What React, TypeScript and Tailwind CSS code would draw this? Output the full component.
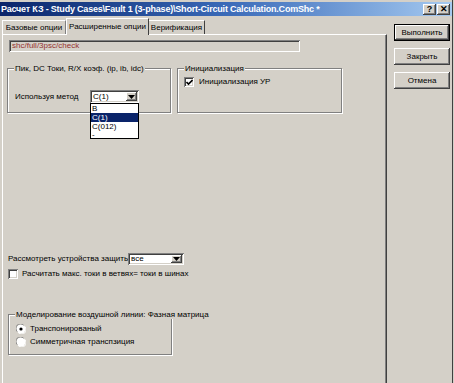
import React from "react";

const raised =
  "shadow-[inset_-1px_-1px_0_#404040,inset_1px_1px_0_#ffffff,inset_-2px_-2px_0_#808080,inset_2px_2px_0_#d4d0c8]";
const sunken =
  "shadow-[inset_1px_1px_0_#808080,inset_-1px_-1px_0_#ffffff,inset_2px_2px_0_#404040,inset_-2px_-2px_0_#d4d0c8]";
const etched = "border border-[#808080] shadow-[1px_1px_0_#fff,inset_1px_1px_0_#fff]";

function TitleBtn({ children }: { children: React.ReactNode }) {
  return (
    <div className={`w-[13px] h-[11px] bg-[#d4d0c8] ${raised} flex items-center justify-center text-[9px] font-bold text-black`}>
      {children}
    </div>
  );
}

function Arrow() {
  return (
    <div className={`w-[11px] h-full bg-[#d4d0c8] ${raised} flex items-center justify-center`}>
      <svg width="7" height="4" viewBox="0 0 7 4">
        <path d="M0 0h7L3.5 4z" fill="#000" />
      </svg>
    </div>
  );
}

function Check({ checked }: { checked?: boolean }) {
  return (
    <div className={`w-[10px] h-[10px] bg-white ${sunken} flex items-center justify-center shrink-0`}>
      {checked && (
        <svg width="7" height="7" viewBox="0 0 7 7">
          <path d="M0.5 3l2 2 4-4" stroke="#000" strokeWidth="1.6" fill="none" />
        </svg>
      )}
    </div>
  );
}

function Radio({ checked }: { checked?: boolean }) {
  return (
    <svg width="10" height="10" viewBox="0 0 10 10" className="shrink-0">
      <circle cx="5" cy="5" r="4.5" fill="#fff" />
      <path d="M1.2 7.6A4.5 4.5 0 0 1 7.6 1.2" stroke="#808080" strokeWidth="1" fill="none" />
      <path d="M2.4 8.8A4.5 4.5 0 0 0 8.8 2.4" stroke="#ffffff" strokeWidth="1" fill="none" />
      {checked && <circle cx="5" cy="5" r="1.6" fill="#000" />}
    </svg>
  );
}

function WinButton({ children, def }: { children: React.ReactNode; def?: boolean }) {
  return (
    <div
      className={`w-[56px] h-[17px] bg-[#d4d0c8] flex items-center justify-center ${
        def ? "border border-black" : ""
      }`}
    >
      <div className={`w-full h-full ${raised} flex items-center justify-center`}>{children}</div>
    </div>
  );
}

function GroupLabel({ children }: { children: React.ReactNode }) {
  return (
    <div className="-mt-[5px] ml-[6px] h-[9px] px-[1px] bg-[#d4d0c8] w-fit whitespace-nowrap flex items-center">
      {children}
    </div>
  );
}

export default function App() {
  return (
    <div className="w-[454px] h-[383px] bg-[#d4d0c8] overflow-hidden font-['Liberation_Sans',Arial,sans-serif] text-[8px] text-black leading-none">
      <div className="w-[453px] h-full border-r border-[#404040]">
        <div className="h-[2px]" />
        <div className="h-[14px] flex items-center bg-gradient-to-r from-[#0a246a] via-[#3a6ab8] to-[#a6caf0] pl-[1px] pr-[2px]">
          <span className="text-white font-bold text-[9px] whitespace-nowrap tracking-[-0.2px]">
            Расчет КЗ - Study Cases\Fault 1 (3-phase)\Short-Circuit Calculation.ComShc *
          </span>
          <div className="ml-auto flex gap-[1px]">
            <TitleBtn>?</TitleBtn>
            <TitleBtn>✕</TitleBtn>
          </div>
        </div>
        <div className="flex">
          <div className="w-[387px] pl-[2px] flex flex-col">
            <div className="flex items-end h-[18px] whitespace-nowrap">
              <div className="w-[64px] h-[14px] border-t border-l border-white border-r border-r-[#808080] flex items-center justify-center">
                Базовые опции
              </div>
              <div className="w-[83px] h-[17px] -mb-[1px] relative z-10 bg-[#d4d0c8] border-t border-l border-white border-r border-r-[#404040] flex items-center justify-center pb-[1px]">
                Расширенные опции
              </div>
              <div className="w-[56px] h-[14px] border-t border-white border-r border-r-[#404040] flex items-center justify-center">
                Верификация
              </div>
            </div>
            <div className="h-[360px] border-t border-l border-white border-r border-r-[#404040] shadow-[inset_-1px_0_0_#808080] flex flex-col pl-[4px] whitespace-nowrap">
              <div className={`mt-[5px] ml-[2px] w-[291px] h-[12px] ${sunken} flex items-center pl-[3px] text-[#963030]`}>
                shc/full/3psc/check
              </div>
              <div className="flex mt-[16px] gap-[6px]">
                <div className={`w-[164px] h-[45px] ${etched} flex flex-col`}>
                  <GroupLabel>Пик, DC Токи, R/X коэф. (ip, ib, idc)</GroupLabel>
                  <div className="flex items-center mt-[17px] pl-[7px]">
                    <span className="w-[75px]">Используя метод</span>
                    <div className="relative">
                      <div className={`w-[49px] h-[13px] bg-white ${sunken} flex items-center p-[2px]`}>
                        <span className="flex-1 pl-[1px]">C(1)</span>
                        <Arrow />
                      </div>
                      <div className="absolute left-0 top-full w-[49px] h-[36px] bg-white border border-black flex flex-col z-20">
                        <div className="h-[9px] pl-[1px] flex items-center">B</div>
                        <div className="h-[9px] pl-[1px] flex items-center bg-[#0a246a] text-white">C(1)</div>
                        <div className="h-[9px] pl-[1px] flex items-center">C(012)</div>
                        <div className="h-[7px] pl-[1px] flex items-center">-</div>
                      </div>
                    </div>
                  </div>
                </div>
                <div className={`w-[165px] h-[45px] ${etched} flex flex-col`}>
                  <GroupLabel>Инициализация</GroupLabel>
                  <div className="flex items-center gap-[5px] mt-[4px] pl-[6px]">
                    <Check checked />
                    <span>Инициализация УР</span>
                  </div>
                </div>
              </div>
              <div className="flex items-center mt-[140px] ml-[1px]">
                <span className="w-[120px] overflow-hidden">Рассмотреть устройства защиты</span>
                <div className={`w-[56px] h-[12px] bg-white ${sunken} flex items-center p-[2px]`}>
                  <span className="flex-1 pl-[1px]">все</span>
                  <Arrow />
                </div>
              </div>
              <div className="flex items-center gap-[4px] mt-[4px] ml-[1px]">
                <Check />
                <span>Расчитать макс. токи в ветвях= токи в шинах</span>
              </div>
              <div className={`mt-[35px] ml-[1px] w-[164px] h-[41px] ${etched} flex flex-col`}>
                <GroupLabel>Моделирование воздушной линии: Фазная матрица</GroupLabel>
                <div className="flex items-center gap-[4px] mt-[5px] pl-[7px]">
                  <Radio checked />
                  <span>Транспонированый</span>
                </div>
                <div className="flex items-center gap-[4px] mt-[3px] pl-[7px]">
                  <Radio />
                  <span>Симметричная транспзиция</span>
                </div>
              </div>
            </div>
          </div>
          <div className="flex flex-col gap-[7px] ml-[7px] mt-[8px]">
            <WinButton def>Выполнить</WinButton>
            <WinButton>Закрыть</WinButton>
            <WinButton>Отмена</WinButton>
          </div>
        </div>
      </div>
    </div>
  );
}
